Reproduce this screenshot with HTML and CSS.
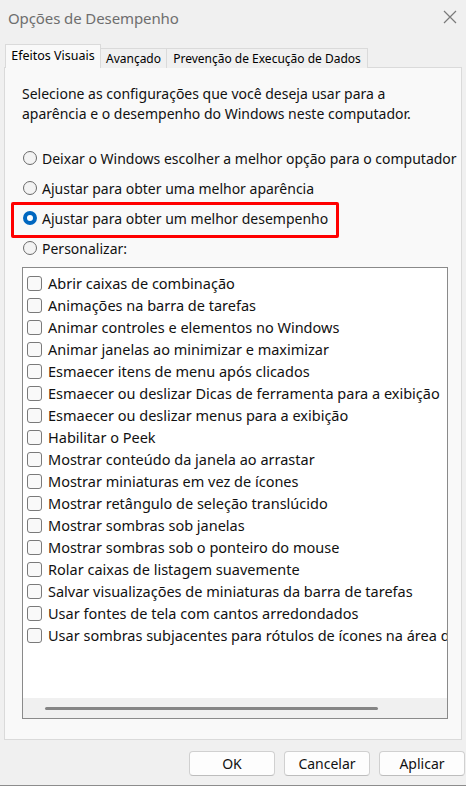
FILE: index.html
```html
<!DOCTYPE html>
<html lang="pt-BR">
<head>
<meta charset="utf-8">
<link rel="stylesheet" href="styles.css">
</head>
<body>
<div class="window">
  <div class="titlebar">
    <span class="title">Opções de Desempenho</span>
    <svg class="close" width="14" height="14" viewBox="0 0 14 14"><path d="M1 1L13 13M13 1L1 13" stroke="#7a7a7a" stroke-width="1.2" fill="none"/></svg>
  </div>
  <div class="tabs">
    <div class="tab active tab-efeitos">Efeitos Visuais</div>
    <div class="tab tab-avancado">Avançado</div>
    <div class="tab tab-dep">Prevenção de Execução de Dados</div>
  </div>
  <div class="panel">
    <p class="intro">Selecione as configurações que você deseja usar para a<br>aparência e o desempenho do Windows neste computador.</p>
    <div class="radios">
      <div class="radio-row"><span class="radio"></span><span>Deixar o Windows escolher a melhor opção para o computador</span></div>
      <div class="radio-row"><span class="radio"></span><span>Ajustar para obter uma melhor aparência</span></div>
      <div class="radio-row highlighted"><span class="radio checked"></span><span>Ajustar para obter um melhor desempenho</span></div>
      <div class="radio-row"><span class="radio"></span><span>Personalizar:</span></div>
    </div>
    <div class="listbox">
      <div class="items">
        <div class="item"><span class="check"></span><span>Abrir caixas de combinação</span></div>
        <div class="item"><span class="check"></span><span>Animações na barra de tarefas</span></div>
        <div class="item"><span class="check"></span><span>Animar controles e elementos no Windows</span></div>
        <div class="item"><span class="check"></span><span>Animar janelas ao minimizar e maximizar</span></div>
        <div class="item"><span class="check"></span><span>Esmaecer itens de menu após clicados</span></div>
        <div class="item"><span class="check"></span><span>Esmaecer ou deslizar Dicas de ferramenta para a exibição</span></div>
        <div class="item"><span class="check"></span><span>Esmaecer ou deslizar menus para a exibição</span></div>
        <div class="item"><span class="check"></span><span>Habilitar o Peek</span></div>
        <div class="item"><span class="check"></span><span>Mostrar conteúdo da janela ao arrastar</span></div>
        <div class="item"><span class="check"></span><span>Mostrar miniaturas em vez de ícones</span></div>
        <div class="item"><span class="check"></span><span>Mostrar retângulo de seleção translúcido</span></div>
        <div class="item"><span class="check"></span><span>Mostrar sombras sob janelas</span></div>
        <div class="item"><span class="check"></span><span>Mostrar sombras sob o ponteiro do mouse</span></div>
        <div class="item"><span class="check"></span><span>Rolar caixas de listagem suavemente</span></div>
        <div class="item"><span class="check"></span><span>Salvar visualizações de miniaturas da barra de tarefas</span></div>
        <div class="item"><span class="check"></span><span>Usar fontes de tela com cantos arredondados</span></div>
        <div class="item"><span class="check"></span><span>Usar sombras subjacentes para rótulos de ícones na área de trabalho</span></div>
      </div>
      <div class="hscroll"><div class="thumb"></div></div>
    </div>
  </div>
  <div class="buttons">
    <button class="btn">OK</button>
    <button class="btn">Cancelar</button>
    <button class="btn">Aplicar</button>
  </div>
</div>
</body>
</html>
```
FILE: styles.css
```css
html, body {
  margin: 0;
  padding: 0;
  background: #f0f0f0;
}
body {
  width: 466px;
  height: 786px;
  overflow: hidden;
  font-family: "Segoe UI", "Noto Sans", "Open Sans", sans-serif;
  color: #1a1a1a;
}
.window {
  width: 466px;
  height: 786px;
  box-sizing: border-box;
  border-bottom: 1px solid #8c8c8c;
  display: flex;
  flex-direction: column;
  background: #f0f0f0;
}
.titlebar {
  height: 36px;
  display: flex;
  align-items: center;
  justify-content: space-between;
  padding: 0 9px 0 8px;
}
.title {
  font-size: 15px;
  color: #6e6e6e;
  letter-spacing: -0.1px;
}
.close { margin-top: -2px; }
.tabs {
  display: flex;
  align-items: flex-end;
  padding-left: 5px;
  margin-top: 8px;
  height: 24px;
  position: relative;
  z-index: 1;
  margin-bottom: -1px;
}
.tab {
  font-size: 12px;
  height: 20px;
  line-height: 19px;
  text-align: center;
  border: 1px solid #dadada;
  border-bottom: none;
  border-left: none;
  background: #f0f0f0;
  color: #000;
  box-sizing: border-box;
  white-space: nowrap;
}
.tab-efeitos { width: 96px; }
.tab-avancado { width: 66px; }
.tab-dep { width: 201px; }
.tab.active {
  height: 24px;
  line-height: 22px;
  font-size: 12.5px;
  border-left: 1px solid #dadada;
  background: #f9f9f9;
}
.panel {
  margin: 0 4px;
  height: 673px;
  box-sizing: border-box;
  border: 1px solid #dadada;
  background: #f9f9f9;
  padding: 16px 0 0 17px;
  overflow: hidden;
  font-size: 14.5px;
}
.intro {
  margin: 0;
  line-height: 20px;
  white-space: nowrap;
  font-size: 14px;
  color: #111;
}
.radios {
  margin-top: 19px;
  display: flex;
  flex-direction: column;
  font-size: 14px;
  color: #111;
}
.radio-row {
  height: 30px;
  display: flex;
  align-items: center;
  gap: 5px;
  white-space: nowrap;
  position: relative;
  padding-left: 1px;
}
.radio-row.highlighted::before {
  content: "";
  position: absolute;
  left: -11px;
  top: -1px;
  width: 328px;
  height: 36px;
  border: 3px solid #ff0000;
  border-radius: 2px;
  box-sizing: border-box;
}
.radio {
  width: 14px;
  height: 14px;
  border-radius: 50%;
  border: 1px solid #6a6a6a;
  background: #f3f3f3;
  box-sizing: border-box;
  flex: none;
}
.radio.checked {
  border: 4px solid #0067c0;
  background: #fff;
}
.listbox {
  margin-top: 4px;
  width: 426px;
  height: 452px;
  box-sizing: border-box;
  border: 1px solid #8a8a8a;
  background: #fff;
  display: flex;
  flex-direction: column;
}
.items {
  flex: 1;
  padding-top: 4px;
  overflow: hidden;
}
.item {
  height: 22px;
  display: flex;
  align-items: center;
  gap: 6px;
  padding-left: 4px;
  white-space: nowrap;
  color: #111;
}
.check {
  width: 15px;
  height: 15px;
  border: 1px solid #7a7a7a;
  border-radius: 3px;
  box-sizing: border-box;
  background: #f9f9f9;
  flex: none;
}
.hscroll {
  height: 20px;
  background: #f0f0f0;
  display: flex;
  align-items: center;
  padding-left: 22px;
}
.thumb {
  width: 333px;
  height: 3px;
  border-radius: 2px;
  background: #858585;
}
.buttons {
  display: flex;
  justify-content: flex-end;
  gap: 9px;
  margin-top: 11px;
  padding-right: 1px;
}
.btn {
  width: 86px;
  height: 25px;
  border: 1px solid #d0d0d0;
  border-bottom-color: #bdbdbd;
  border-radius: 4px;
  background: #fdfdfd;
  font-family: inherit;
  font-size: 14px;
  color: #111;
  padding: 0;
}
```
